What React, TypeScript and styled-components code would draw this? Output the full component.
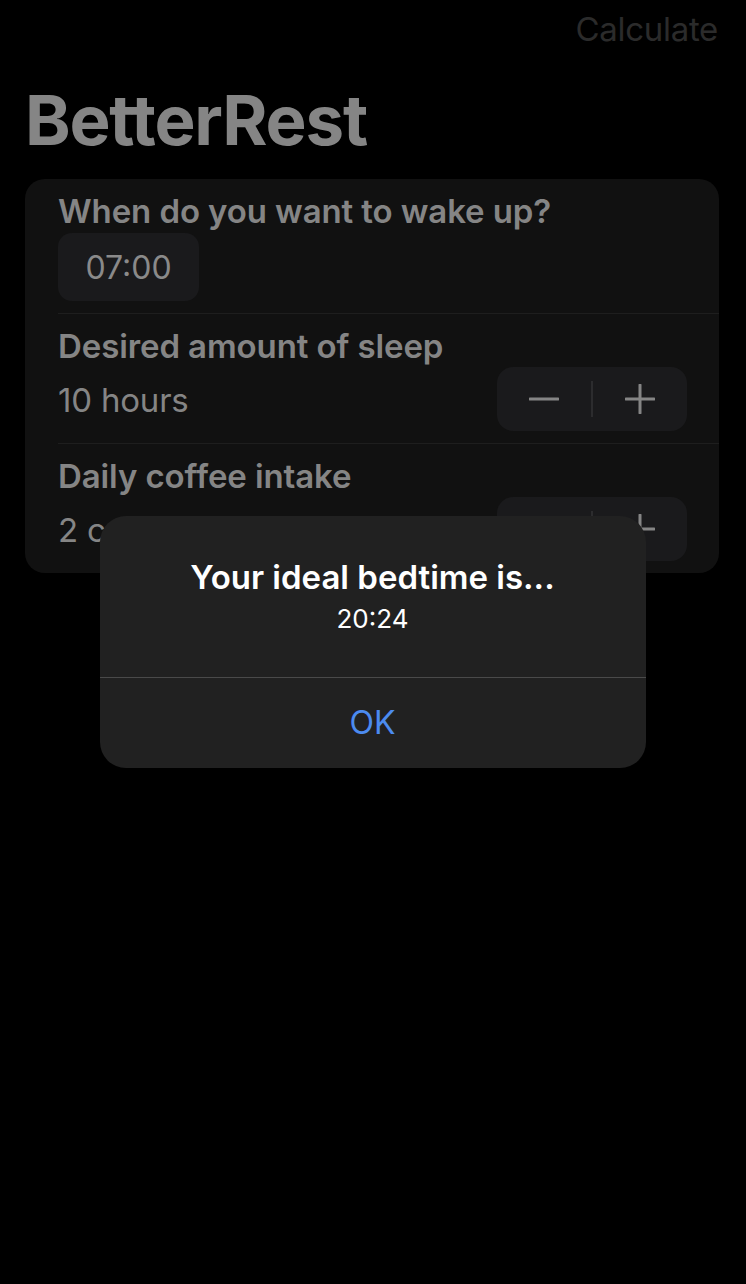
import React from "react";
import styled, { createGlobalStyle } from "styled-components";

const Global = createGlobalStyle`
  html, body { margin: 0; padding: 0; background: #000; }
  body { font-family: Inter, "Noto Sans", sans-serif; -webkit-font-smoothing: antialiased; }
`;

const Screen = styled.div`
  width: 746px;
  height: 1284px;
  background: #000;
  display: flex;
  flex-direction: column;
  position: relative;
  overflow: hidden;
`;

const Toolbar = styled.div`
  display: flex;
  justify-content: flex-end;
  padding: 9px 28px 0 0;
  height: 51px;
`;

const ToolbarButton = styled.span`
  font-size: 33px;
  color: #2b2b2b;
  letter-spacing: -0.3px;
  line-height: 40px;
`;

const LargeTitle = styled.h1`
  margin: 22px 0 0 25px;
  font-size: 69px;
  font-weight: 700;
  letter-spacing: -1.2px;
  color: #858585;
  line-height: 76px;
`;

const Card = styled.div`
  margin: 21px 27px 0 25px;
  background: #111111;
  border-radius: 20px;
  padding-left: 33px;
  display: flex;
  flex-direction: column;
`;

const Row = styled.div<{ $last?: boolean }>`
  display: flex;
  flex-direction: column;
  padding: 12px 32px 12px 0;
  border-bottom: ${(p) => (p.$last ? "none" : "1.5px solid #1e1e1e")};
`;

const Label = styled.div`
  font-size: 33px;
  font-weight: 600;
  color: #858585;
  letter-spacing: -0.1px;
  line-height: 40px;
`;

const ValueLine = styled.div`
  display: flex;
  align-items: center;
  justify-content: space-between;
  margin-top: 1px;
`;

const Value = styled.div`
  font-size: 33px;
  color: #858585;
  letter-spacing: -0.2px;
  padding-top: 2px;
`;

const TimeChip = styled.div`
  align-self: flex-start;
  margin-top: 2px;
  width: 141px;
  height: 68px;
  border-radius: 14px;
  background: #1a1a1c;
  display: flex;
  align-items: center;
  justify-content: center;
  font-size: 32px;
  color: #8a8a8a;
`;

const Stepper = styled.div`
  width: 190px;
  height: 64px;
  border-radius: 16px;
  background: #1a1a1c;
  display: flex;
  align-items: center;
`;

const StepHalf = styled.div`
  flex: 1;
  display: flex;
  align-items: center;
  justify-content: center;
  height: 100%;
`;

const StepDivider = styled.div`
  width: 1.5px;
  height: 36px;
  background: #2c2c2e;
`;

const Overlay = styled.div`
  position: absolute;
  inset: 0;
  display: flex;
  align-items: center;
  justify-content: center;
`;

const Alert = styled.div`
  width: 546px;
  height: 252px;
  border-radius: 26px;
  background: #212121;
  display: flex;
  flex-direction: column;
  margin-left: -1px;
  margin-top: -1px;
`;

const AlertBody = styled.div`
  height: 162px;
  display: flex;
  flex-direction: column;
  align-items: center;
  padding-top: 41px;
  box-sizing: border-box;
  border-bottom: 1.5px solid #4a4a4a;
`;

const AlertTitle = styled.div`
  font-size: 33px;
  font-weight: 600;
  color: #fff;
  letter-spacing: 0;
  line-height: 40px;
`;

const AlertMessage = styled.div`
  font-size: 26px;
  color: #fff;
  margin-top: 6px;
  line-height: 32px;
`;

const AlertButton = styled.div`
  flex: 1;
  display: flex;
  align-items: center;
  justify-content: center;
  font-size: 32px;
  color: #4c8bf0;
`;

const StepIcon = ({ plus }: { plus?: boolean }) => (
  <svg width="30" height="30" viewBox="0 0 30 30">
    <line x1="1" y1="15" x2="29" y2="15" stroke="#858585" strokeWidth="3" strokeLinecap="round" />
    {plus && <line x1="15" y1="1" x2="15" y2="29" stroke="#858585" strokeWidth="3" strokeLinecap="round" />}
  </svg>
);

const StepperControl = () => (
  <Stepper>
    <StepHalf>
      <StepIcon />
    </StepHalf>
    <StepDivider />
    <StepHalf>
      <StepIcon plus />
    </StepHalf>
  </Stepper>
);

export default function App() {
  return (
    <>
      <Global />
      <Screen>
        <Toolbar>
          <ToolbarButton>Calculate</ToolbarButton>
        </Toolbar>
        <LargeTitle>BetterRest</LargeTitle>
        <Card>
          <Row>
            <Label>When do you want to wake up?</Label>
            <TimeChip>07:00</TimeChip>
          </Row>
          <Row>
            <Label>Desired amount of sleep</Label>
            <ValueLine>
              <Value>10 hours</Value>
              <StepperControl />
            </ValueLine>
          </Row>
          <Row $last>
            <Label>Daily coffee intake</Label>
            <ValueLine>
              <Value>2 cups</Value>
              <StepperControl />
            </ValueLine>
          </Row>
        </Card>
        <Overlay>
          <Alert>
            <AlertBody>
              <AlertTitle>Your ideal bedtime is...</AlertTitle>
              <AlertMessage>20:24</AlertMessage>
            </AlertBody>
            <AlertButton>OK</AlertButton>
          </Alert>
        </Overlay>
      </Screen>
    </>
  );
}
